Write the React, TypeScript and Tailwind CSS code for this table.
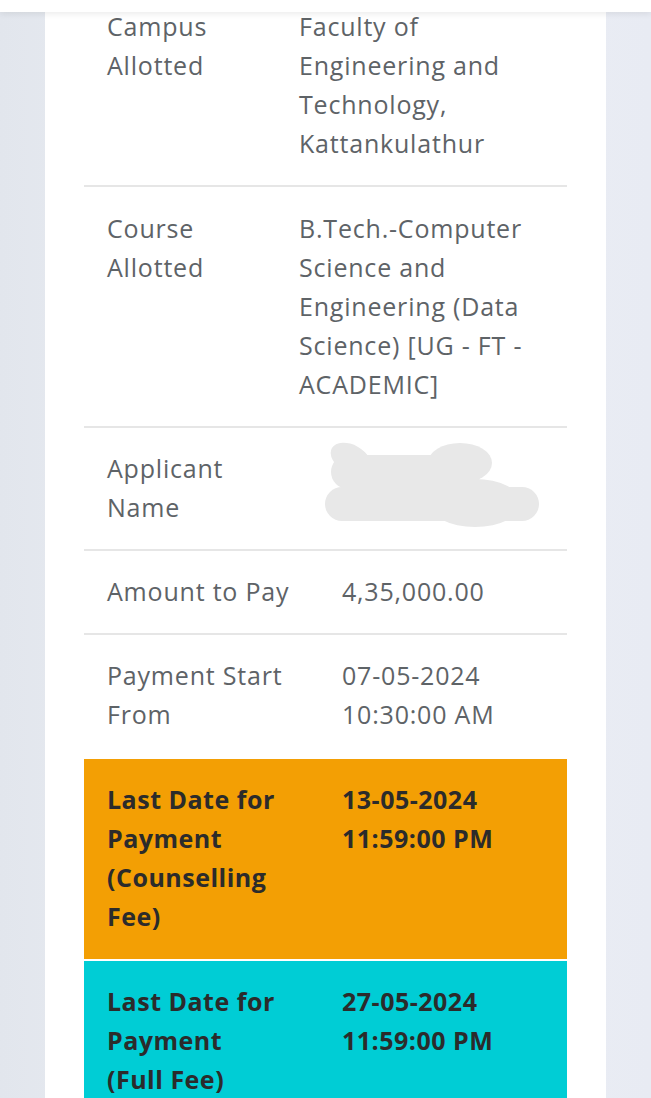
const font = { fontFamily: '"Open Sans", "Liberation Sans", sans-serif' };

const rows = [
  { label: ["Campus", "Allotted"], value: ["Faculty of", "Engineering and", "Technology,", "Kattankulathur"] },
  { label: ["Course", "Allotted"], value: ["B.Tech.-Computer", "Science and", "Engineering (Data", "Science) [UG - FT -", "ACADEMIC]"] },
];

function Lines({ items }: { items: string[] }) {
  return (
    <>
      {items.map((t) => (
        <div key={t} className="whitespace-nowrap">{t}</div>
      ))}
    </>
  );
}

export default function App() {
  return (
    <div className="relative h-[1098px] w-[651px] overflow-hidden bg-gradient-to-r from-[#e2e6ed] via-[#eef1f6] to-[#e8ebf3]" style={font}>
      {/* top header strip */}
      <div className="absolute left-0 right-0 top-0 z-10 h-[12px] bg-white shadow-[0_2px_6px_rgba(0,0,0,0.08)]" />

      <div className="mx-[45px] h-full w-[561px] bg-white px-[39px] pt-[7px]">
        <div className="text-[25px] leading-[39px] tracking-[0.8px] text-[#5e6367]">
          <div className="flex border-b-2 border-[#e6e6e6] pb-[22px] pl-[23px]">
            <div className="w-[192px] shrink-0"><Lines items={rows[0].label} /></div>
            <div><Lines items={rows[0].value} /></div>
          </div>
          <div className="flex border-b-2 border-[#e6e6e6] py-[22px] pl-[23px]">
            <div className="w-[192px] shrink-0"><Lines items={rows[1].label} /></div>
            <div><Lines items={rows[1].value} /></div>
          </div>
          <div className="flex border-b-2 border-[#e6e6e6] pb-[22px] pl-[23px] pt-[21px]">
            <div className="w-[218px] shrink-0"><Lines items={["Applicant", "Name"]} /></div>
            {/* blurred-out applicant name */}
            <svg width="216" height="96" viewBox="0 0 216 96" className="-my-[12px]">
              <g fill="#e8e8e8">
                <ellipse cx="26" cy="22" rx="22" ry="14" transform="rotate(30 26 22)" />
                <rect x="6" y="18" width="150" height="34" rx="17" />
                <ellipse cx="135" cy="26" rx="32" ry="20" />
                <rect x="0" y="50" width="214" height="34" rx="17" />
                <ellipse cx="150" cy="66" rx="46" ry="24" />
              </g>
            </svg>
          </div>
          <div className="flex border-b-2 border-[#e6e6e6] pb-[22px] pl-[23px] pt-[21px]">
            <div className="w-[235px] shrink-0 whitespace-nowrap">Amount to Pay</div>
            <div>4,35,000.00</div>
          </div>
          <div className="flex pb-[25px] pl-[23px] pt-[21px]">
            <div className="w-[235px] shrink-0"><Lines items={["Payment Start", "From"]} /></div>
            <div><Lines items={["07-05-2024", "10:30:00 AM"]} /></div>
          </div>
          <div className="flex h-[200px] bg-[#f39f04] pl-[23px] pt-[21px] font-bold tracking-[0.5px] text-[#2b2b2b]">
            <div className="w-[235px] shrink-0"><Lines items={["Last Date for", "Payment", "(Counselling", "Fee)"]} /></div>
            <div><Lines items={["13-05-2024", "11:59:00 PM"]} /></div>
          </div>
          <div className="mt-[2px] flex h-[200px] bg-[#00cdd5] pl-[23px] pt-[21px] font-bold tracking-[0.5px] text-[#2b2b2b]">
            <div className="w-[235px] shrink-0"><Lines items={["Last Date for", "Payment", "(Full Fee)"]} /></div>
            <div><Lines items={["27-05-2024", "11:59:00 PM"]} /></div>
          </div>
        </div>
      </div>
    </div>
  );
}
